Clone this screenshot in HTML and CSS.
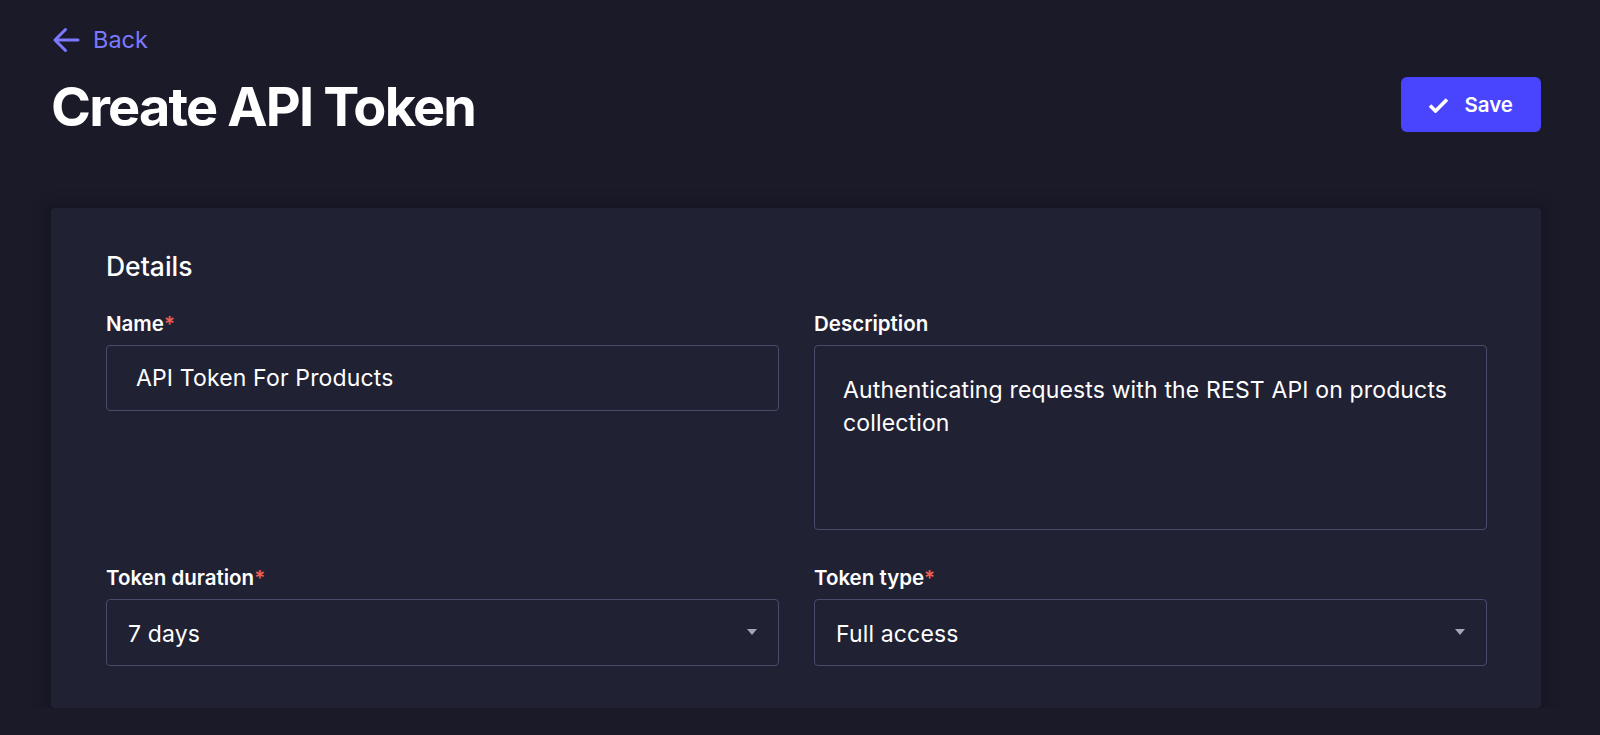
FILE: index.html
```html
<!DOCTYPE html>
<html>
  <head>
    <link rel="stylesheet" href="styles.css">
  </head>
  <body>
    <div class="page">
      <a class="back-link" href="#">
        <svg class="back-icon" width="28" height="26" viewBox="0 0 28 26">
          <path d="M26 13H3M13.5 2.5L3 13l10.5 10.5" fill="none" stroke="currentColor" stroke-width="3" stroke-linecap="round" stroke-linejoin="round" />
        </svg>
        Back
      </a>

      <div class="title-row">
        <h1 class="title">Create API Token</h1>
        <button class="save-btn" type="button">
          <svg width="21" height="16" viewBox="0 0 21 16">
            <path d="M2 8.5l5.5 5.5L19 2.5" fill="none" stroke="currentColor" stroke-width="3.6" />
          </svg>
          Save
        </button>
      </div>

      <form class="card">
        <h2 class="card-title">Details</h2>
        <div class="grid">
          <div class="field">
            <label class="label">Name<span class="req">*</span></label>
            <div class="input">API Token For Products</div>
          </div>
          <div class="field">
            <label class="label">Description</label>
            <div class="textarea">Authenticating requests with the REST API on products collection</div>
          </div>
          <div class="field">
            <label class="label">Token duration<span class="req">*</span></label>
            <div class="select">
              <span>7 days</span>
              <span class="caret"></span>
            </div>
          </div>
          <div class="field">
            <label class="label">Token type<span class="req">*</span></label>
            <div class="select">
              <span>Full access</span>
              <span class="caret"></span>
            </div>
          </div>
        </div>
      </form>
    </div>
  </body>
</html>
```

FILE: styles.css
```css
body {
  margin: 0;
  background-color: #1b1a29;
  color: #ffffff;
  font-family: Inter, "Noto Sans", sans-serif;
}

.page {
  padding: 24px 59px 0 51px;
}

.back-link {
  display: flex;
  align-items: center;
  gap: 13px;
  height: 32px;
  color: #7b79ff;
  font-size: 23.5px;
  line-height: 32px;
  text-decoration: none;
  width: max-content;
}

.back-icon {
  margin-left: 1px;
}

.title-row {
  display: flex;
  justify-content: space-between;
  align-items: center;
  margin-top: 21px;
}

.title {
  margin: 0;
  padding-top: 4px;
  font-size: 54px;
  line-height: 51px;
  font-weight: 700;
  letter-spacing: -1.8px;
}

.save-btn {
  display: flex;
  align-items: center;
  gap: 15px;
  height: 55px;
  padding: 0 28px 0 27px;
  border: none;
  border-radius: 6px;
  background-color: #4945ff;
  color: #ffffff;
  font-family: inherit;
  font-size: 20.5px;
  font-weight: 600;
  cursor: pointer;
}

.card {
  margin-top: 76px;
  padding: 42px 54px 42px 55px;
  background-color: #212134;
  border-radius: 4px;
  box-shadow: 0 2px 14px 8px rgba(0, 0, 0, 0.16);
}

.card-title {
  margin: 0 0 30px;
  font-size: 26.5px;
  line-height: 32px;
  font-weight: 500;
}

.grid {
  display: grid;
  grid-template-columns: 1fr 1fr;
  column-gap: 35px;
  row-gap: 36px;
}

.label {
  display: block;
  margin-bottom: 9px;
  font-size: 20.5px;
  line-height: 24px;
  font-weight: 600;
}

.req {
  color: #ee5e52;
}

.input,
.textarea,
.select {
  box-sizing: border-box;
  border: 1px solid #4a4a6a;
  border-radius: 4px;
  background-color: #212134;
  font-size: 23px;
  letter-spacing: 0.15px;
  color: #ffffff;
}

.input {
  height: 66px;
  display: flex;
  align-items: center;
  padding: 0 29px;
}

.textarea {
  height: 185px;
  padding: 28px 28px;
  line-height: 33px;
}

.select {
  height: 67px;
  display: flex;
  align-items: center;
  justify-content: space-between;
  padding: 2px 21px 0 21px;
}

.caret {
  width: 0;
  height: 0;
  border-left: 5.5px solid transparent;
  border-right: 5.5px solid transparent;
  border-top: 6px solid #a5a5ba;
  margin-top: -4px;
}
```
